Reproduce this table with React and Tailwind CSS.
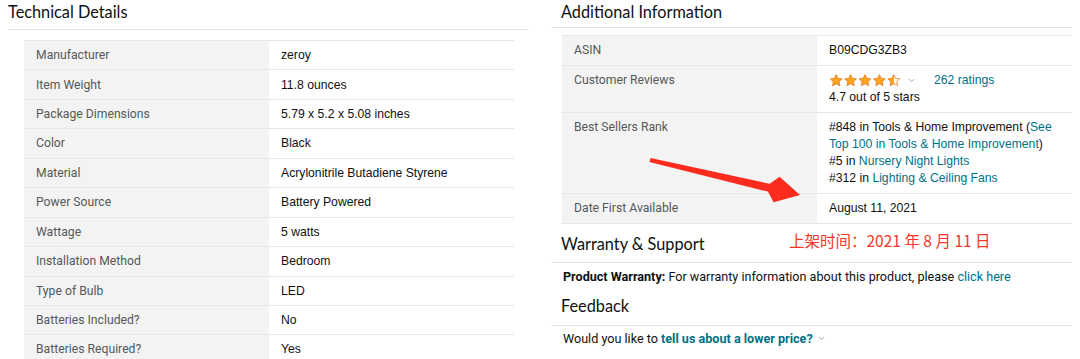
import React from "react";
import { ChevronDown } from "lucide-react";

const heading = { fontFamily: "Lato, 'Noto Sans', sans-serif" };
const ember = { fontFamily: "Roboto, 'Noto Sans', sans-serif" };
const arial = { fontFamily: "'Liberation Sans', Arial, sans-serif" };

const techRows = [
  ["Manufacturer", "zeroy"],
  ["Item Weight", "11.8 ounces"],
  ["Package Dimensions", "5.79 x 5.2 x 5.08 inches"],
  ["Color", "Black"],
  ["Material", "Acrylonitrile Butadiene Styrene"],
  ["Power Source", "Battery Powered"],
  ["Wattage", "5 watts"],
  ["Installation Method", "Bedroom"],
  ["Type of Bulb", "LED"],
  ["Batteries Included?", "No"],
  ["Batteries Required?", "Yes"],
];

const STAR = "M12 2.2l3 6.2 6.8.9-5 4.7 1.3 6.7L12 17.4l-6.1 3.3 1.3-6.7-5-4.7 6.8-.9z";

function Stars() {
  return (
    <svg width="72" height="15" viewBox="0 0 120 24" className="shrink-0">
      <defs>
        <linearGradient id="halfstar" x1="0" x2="1" y1="0" y2="0">
          <stop offset="50%" stopColor="#ffa41c" />
          <stop offset="50%" stopColor="#ffffff" />
        </linearGradient>
      </defs>
      {[0, 1, 2, 3, 4].map((i) => (
        <path
          key={i}
          d={STAR}
          transform={`translate(${i * 24} 0)`}
          fill={i === 4 ? "url(#halfstar)" : "#ffa41c"}
          stroke="#de7921"
          strokeWidth="1.3"
          strokeLinejoin="round"
        />
      ))}
    </svg>
  );
}

function Link({ children, bold }) {
  return <span className={`text-[#007185] ${bold ? "font-bold" : ""}`}>{children}</span>;
}

export default function App() {
  return (
    <div className="relative flex h-[359px] w-[1080px] overflow-hidden bg-white text-[#0f1111]">
      {/* Technical Details */}
      <section className="ml-[8px] w-[521px] shrink-0">
        <h2 style={heading} className="border-b border-[#e3e3e3] pb-[5px] text-[16.3px] font-normal leading-[24px]">
          Technical Details
        </h2>
        <div className="ml-[16px] mr-[15px] mt-[10px]">
          {techRows.map(([k, v]) => (
            <div key={k} className="grid h-[29.45px] grid-cols-2 border-t border-[#e7e7e7]">
              <div style={ember} className="flex items-center bg-[#f3f3f3] px-[12px] text-[12.2px] text-[#565959]">
                {k}
              </div>
              <div style={arial} className="flex items-center px-[12px] text-[12.2px]">
                {v}
              </div>
            </div>
          ))}
        </div>
      </section>

      {/* Additional Information */}
      <section className="ml-[22px] w-[521px] shrink-0">
        <h2 style={heading} className="border-b border-[#e3e3e3] pb-[3px] pl-[10px] text-[16.3px] font-normal leading-[24px]">
          Additional Information
        </h2>
        <div className="ml-[11px] mt-[7px] border-b border-[#e7e7e7] leading-[17px]">
          <div className="grid grid-cols-2 border-t border-[#e7e7e7]">
            <div style={ember} className="bg-[#f3f3f3] px-[12px] py-[6px] text-[12.2px] text-[#565959]">ASIN</div>
            <div style={arial} className="px-[12px] py-[6px] text-[12.2px]">B09CDG3ZB3</div>
          </div>
          <div className="grid grid-cols-2 border-t border-[#e7e7e7]">
            <div style={ember} className="bg-[#f3f3f3] px-[12px] py-[6px] text-[12.2px] text-[#565959]">Customer Reviews</div>
            <div style={arial} className="px-[12px] py-[6px] text-[12.2px]">
              <div className="flex h-[17px] items-center">
                <Stars />
                <ChevronDown size={9} strokeWidth={2} className="ml-[6px] text-[#888c8c]" />
                <span className="ml-[18px]">
                  <Link>262 ratings</Link>
                </span>
              </div>
              <div>4.7 out of 5 stars</div>
            </div>
          </div>
          <div className="grid grid-cols-2 border-t border-[#e7e7e7]">
            <div style={ember} className="bg-[#f3f3f3] px-[12px] py-[6px] text-[12.2px] text-[#565959]">Best Sellers Rank</div>
            <div style={arial} className="px-[12px] py-[6px] text-[12.2px]">
              <div>
                #848 in Tools &amp; Home Improvement (<Link>See Top 100 in Tools &amp; Home Improvement</Link>)
              </div>
              <div>
                #5 in <Link>Nursery Night Lights</Link>
              </div>
              <div>
                #312 in <Link>Lighting &amp; Ceiling Fans</Link>
              </div>
            </div>
          </div>
          <div className="grid grid-cols-2 border-t border-[#e7e7e7]">
            <div style={ember} className="bg-[#f3f3f3] px-[12px] py-[6px] text-[12.2px] text-[#565959]">Date First Available</div>
            <div style={arial} className="px-[12px] py-[6px] text-[12.2px]">August 11, 2021</div>
          </div>
        </div>

        <h2 style={heading} className="mt-[8px] border-b border-[#e3e3e3] pb-[6px] pl-[10px] text-[16.3px] font-normal leading-[24px]">
          Warranty &amp; Support
        </h2>
        <p style={ember} className="mt-[4px] pl-[12px] text-[12.6px] leading-[19px]">
          <span className="font-bold">Product Warranty:</span> For warranty information about this product, please{" "}
          <Link>click here</Link>
        </p>
        <h2 style={heading} className="mt-[8px] border-b border-[#e3e3e3] pb-[7px] pl-[10px] text-[16.3px] font-normal leading-[24px]">
          Feedback
        </h2>
        <p style={ember} className="mt-[3px] flex items-center pl-[12px] text-[12.6px] leading-[19px]">
          <span>
            Would you like to <Link bold>tell us about a lower price?</Link>
          </span>
          <ChevronDown size={9} strokeWidth={2} className="ml-[4px] text-[#888c8c]" />
        </p>
      </section>

      {/* red annotation */}
      <svg className="pointer-events-none absolute left-0 top-0" width="1080" height="359">
        <polygon
          points="650.5,158 769.7,183.8 779.6,176.8 800,195 773.6,202.2 767.9,191.6 649.5,162"
          fill="#fb2b1e"
          strokeLinejoin="round"
        />
      </svg>
      <div
        style={{ fontFamily: "'Noto Sans CJK SC', sans-serif" }}
        className="absolute left-[789px] top-[229px] text-[15.5px] leading-[22px] text-[#f5362a]"
      >
        上架时间：2021 年 8 月 11 日
      </div>
    </div>
  );
}
